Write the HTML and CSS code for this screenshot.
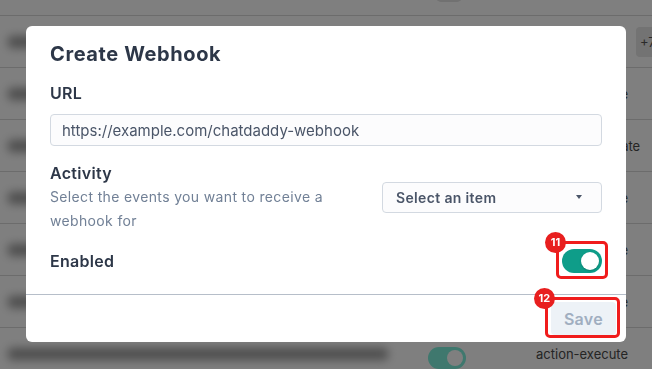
FILE: index.html
```html
<!DOCTYPE html>
<html lang="en">
<head>
    <meta charset="UTF-8">
    <meta name="viewport" content="width=device-width, initial-scale=1.0">
    <title>Create Webhook</title>
    <link rel="stylesheet" href="styles.css">
</head>
<body>
    <div class="page">
        <div class="page-top"><span class="top-chip"></span></div>
        <div class="row">
            <span class="blur-text w1"></span>
            <span></span>
            <span class="chip">+7</span>
        </div>
        <div class="row">
            <span class="blur-text w2"></span>
            <span></span>
            <span class="event">action-execute</span>
        </div>
        <div class="row">
            <span class="blur-text w3"></span>
            <span></span>
            <span class="event">message-update</span>
        </div>
        <div class="row">
            <span class="blur-text w1"></span>
            <span></span>
            <span class="event">action-execute</span>
        </div>
        <div class="row">
            <span class="blur-text w2"></span>
            <span></span>
            <span class="event">action-execute</span>
        </div>
        <div class="row">
            <span class="blur-text w3"></span>
            <span></span>
            <span class="event">action-execute</span>
        </div>
        <div class="row">
            <span class="blur-text w4"></span>
            <span class="mini-toggle"></span>
            <span class="event">action-execute</span>
        </div>
    </div>

    <div class="overlay"></div>

    <div class="modal">
        <div class="modal-body">
            <h2 class="modal-title">Create Webhook</h2>

            <div class="field">
                <label class="field-label" for="url">URL</label>
                <input class="text-input" type="text" id="url" value="https://example.com/chatdaddy-webhook">
            </div>

            <div class="field field-row activity">
                <div class="field-info">
                    <div class="field-label">Activity</div>
                    <p class="field-help">Select the events you want to receive a webhook for</p>
                </div>
                <div class="select">
                    <span>Select an item</span>
                    <span class="caret"></span>
                </div>
            </div>

            <div class="field field-row enabled">
                <div class="field-label">Enabled</div>
                <span class="marked">
                    <span class="switch"><span class="knob"></span></span>
                    <span class="marker marker-switch"><span class="badge">11</span></span>
                </span>
            </div>
        </div>

        <div class="modal-footer">
            <span class="marked">
                <button class="btn-save" type="button">Save</button>
                <span class="marker marker-save"><span class="badge">12</span></span>
            </span>
        </div>
    </div>
</body>
</html>
```

FILE: styles.css
```css
* {
    box-sizing: border-box;
}

body {
    margin: 0;
    width: 652px;
    height: 369px;
    overflow: hidden;
    font-family: Inter, "Noto Sans", sans-serif;
    background: #fff;
    color: #2d3748;
}

/* page behind the dialog */
.page-top {
    height: 16px;
    border-bottom: 1px solid #d8d8d8;
    position: relative;
}

.top-chip {
    position: absolute;
    left: 436px;
    top: -20px;
    width: 26px;
    height: 22px;
    border-radius: 5px;
    background: #e2e2e2;
}

.row {
    display: grid;
    grid-template-columns: 428px 108px 1fr;
    align-items: center;
    height: 52px;
    border-bottom: 1px solid #d8d8d8;
}

.blur-text {
    display: block;
    height: 12px;
    margin-left: 8px;
    background: #9a9a9a;
    border-radius: 4px;
    filter: blur(5px);
}

.w1 { width: 160px; }
.w2 { width: 220px; }
.w3 { width: 190px; }
.w4 { width: 380px; }

.event {
    font-size: 13px;
    color: #4a4a4a;
}

.chip {
    justify-self: end;
    margin-right: -14px;
    width: 30px;
    height: 30px;
    line-height: 30px;
    padding-left: 4px;
    font-size: 13px;
    border-radius: 4px;
    background: #e6e6e6;
    color: #555;
}

.mini-toggle {
    position: relative;
    width: 38px;
    height: 22px;
    border-radius: 11px;
    background: #7ef0dc;
    margin-top: 8px;
}

.mini-toggle::after {
    content: "";
    position: absolute;
    right: 3px;
    top: 3px;
    width: 16px;
    height: 16px;
    border-radius: 50%;
    background: #fff;
}

.overlay {
    position: fixed;
    inset: 0;
    background: rgba(0, 0, 0, 0.5);
}

/* dialog */
.modal {
    position: absolute;
    left: 26px;
    top: 26px;
    width: 600px;
    background: #fff;
    border-radius: 6px;
}

.modal-body {
    padding: 14px 24px 21px;
}

.modal-title {
    margin: 0 0 13px;
    font-size: 20px;
    line-height: 28px;
    font-weight: 700;
    letter-spacing: 0.6px;
    color: #2d3748;
}

.field + .field {
    margin-top: 15px;
}

.field-label {
    display: block;
    font-size: 16px;
    line-height: 24px;
    font-weight: 600;
    letter-spacing: 0.3px;
    color: #2d3748;
}

.text-input {
    display: block;
    width: 100%;
    height: 32px;
    margin-top: 9px;
    padding: 0 11px;
    border: 1px solid #d3d9e1;
    border-radius: 4px;
    background: #fcfcfd;
    font-family: inherit;
    font-size: 15px;
    color: #4a5568;
}

.field-row {
    display: flex;
    justify-content: space-between;
    align-items: center;
}

.field-help {
    margin: 0;
    width: 300px;
    font-size: 14px;
    line-height: 24px;
    letter-spacing: 0.35px;
    color: #718096;
}

.select {
    display: flex;
    justify-content: space-between;
    align-items: center;
    width: 220px;
    height: 31px;
    padding: 0 19px 0 13px;
    border: 1px solid #d3d9e1;
    border-radius: 4px;
    background: #fcfcfd;
    font-size: 14px;
    font-weight: 600;
    letter-spacing: 0.35px;
    color: #4a5568;
}

.caret {
    width: 0;
    height: 0;
    border-left: 3.5px solid transparent;
    border-right: 3.5px solid transparent;
    border-top: 4px solid #4a5568;
}

.field-row.enabled {
    margin-top: 16px;
}

.marked {
    position: relative;
    display: inline-flex;
}

.switch {
    display: flex;
    justify-content: flex-end;
    align-items: center;
    width: 40px;
    height: 24px;
    padding: 3px;
    border-radius: 12px;
    background: #0e9d89;
}

.knob {
    width: 18px;
    height: 18px;
    border-radius: 50%;
    background: #fff;
    box-shadow: 0 1px 2px rgba(0, 0, 0, 0.2);
}

.modal-footer {
    display: flex;
    justify-content: flex-end;
    padding: 7px 10px 7px;
    border-top: 1px solid #b6bec9;
}

.btn-save {
    height: 33px;
    padding: 0 13px;
    border: none;
    border-radius: 4px;
    background: #edf2f7;
    font-family: inherit;
    font-size: 16px;
    font-weight: 600;
    letter-spacing: 0.3px;
    color: #a0aec0;
}

/* red annotation frames */
.marker {
    position: absolute;
    border: 3px solid #f01c1c;
    border-radius: 5px;
}

.marker-switch {
    top: -8px;
    bottom: -6px;
    left: -6px;
    right: -6px;
}

.marker-save {
    top: -5px;
    bottom: -3px;
    left: -6px;
    right: -4px;
}

.badge {
    position: absolute;
    top: -12px;
    left: -14px;
    width: 21px;
    height: 21px;
    line-height: 21px;
    border-radius: 50%;
    background: #e81f1f;
    color: #fff;
    font-size: 11px;
    font-weight: 700;
    text-align: center;
}
```
